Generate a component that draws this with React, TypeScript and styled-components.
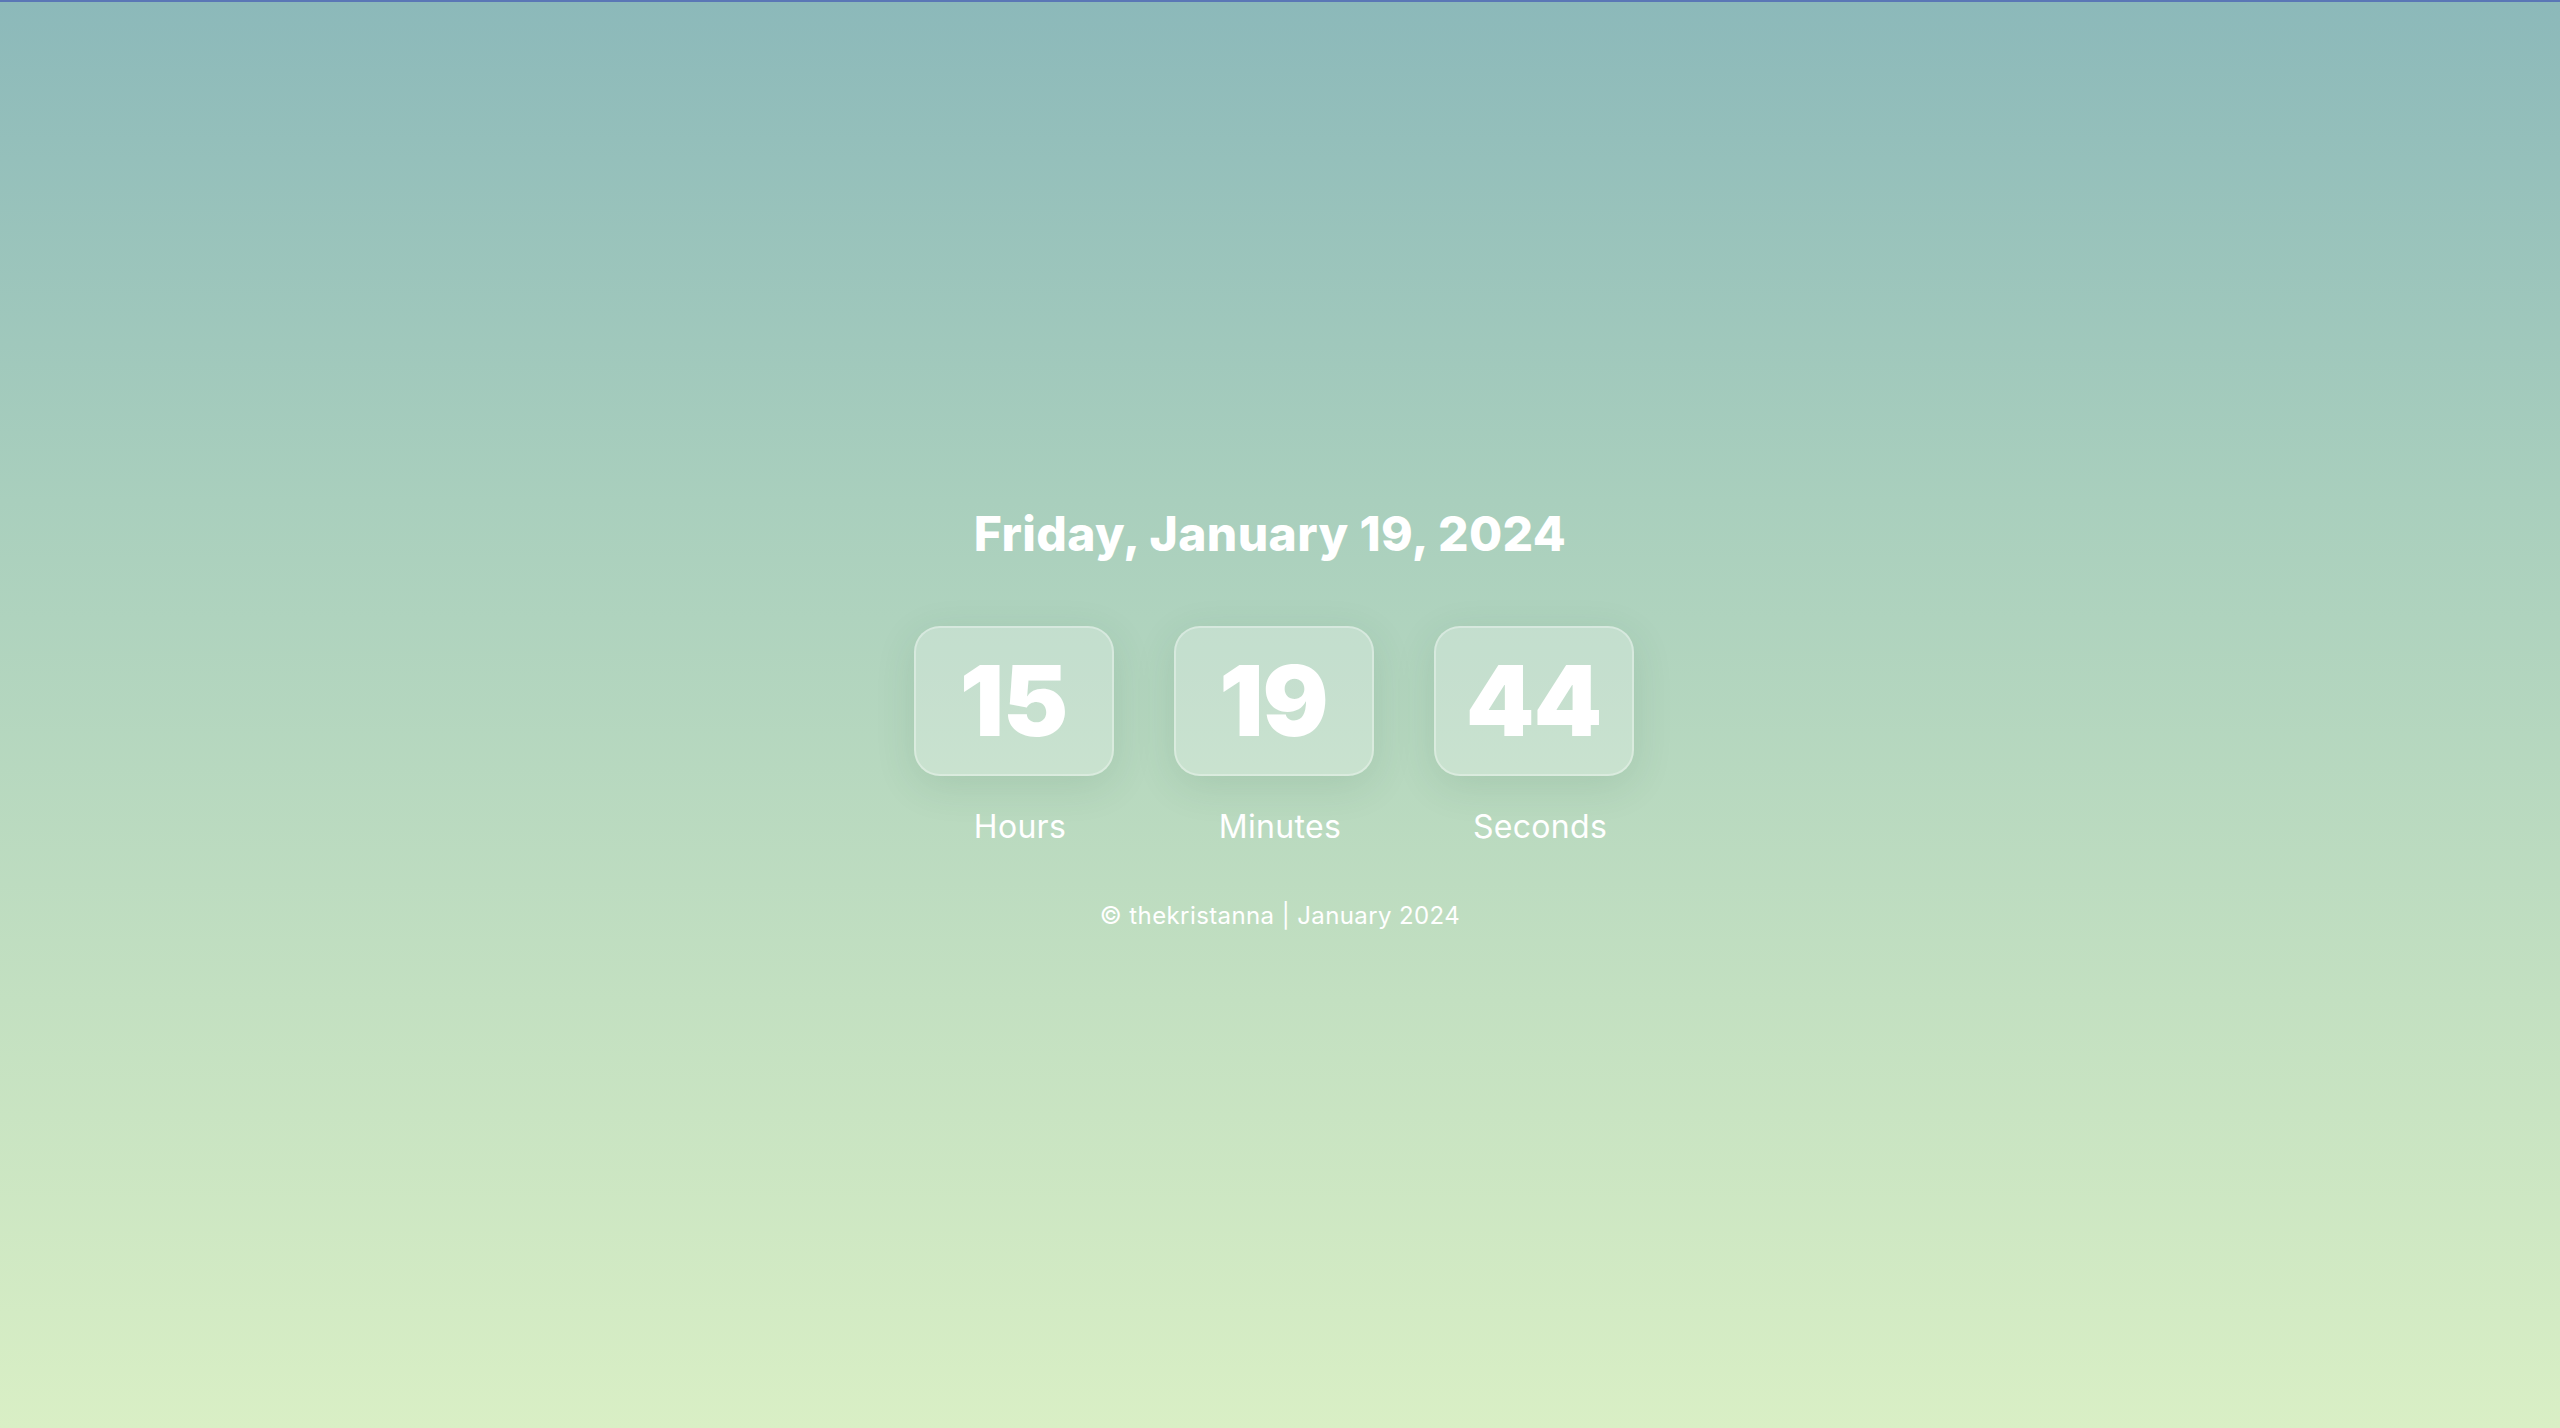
import styled, { createGlobalStyle } from "styled-components";

const GlobalStyle = createGlobalStyle`
    html, body {
        margin: 0;
        padding: 0;
    }
    * {
        box-sizing: border-box;
    }
`

const Page = styled.div`
    min-height: 100vh;
    border-top: 2px solid #5a77b6;
    background: linear-gradient(to bottom, #8cb9ba 0%, #a9cfbd 35%, #c3e0c1 70%, #d9efc5 100%);
    display: flex;
    flex-direction: column;
    align-items: center;
    padding-top: 508px;
    color: #ffffff;
    font-family: 'Inter', 'Noto Sans', sans-serif;
`

const DateLine = styled.h1`
    margin: 0 20px 0 0;
    font-size: 48px;
    line-height: 48px;
    font-weight: 800;
    letter-spacing: 0.4px;
`

const Clock = styled.div`
    display: flex;
    gap: 47px;
    margin-top: 68px;
`

const Unit = styled.div`
    width: 213px;
    display: flex;
    flex-direction: column;
    align-items: center;
`

const Tile = styled.div`
    width: 200px;
    height: 150px;
    margin-right: 13px;
    border-radius: 26px;
    background: rgba(255, 255, 255, 0.25);
    border: 2px solid rgba(255, 255, 255, 0.32);
    box-shadow: 0 10px 40px rgba(40, 90, 60, 0.12);
    display: flex;
    justify-content: center;
    align-items: center;
    font-size: 98px;
    font-weight: 900;
    line-height: 1;
    letter-spacing: -1px;
`

const Label = styled.div`
    margin-top: 35px;
    font-size: 32px;
    line-height: 31px;
    font-weight: 400;
    letter-spacing: 0.3px;
`

const Footer = styled.footer`
    margin-top: 62px;
    font-size: 24px;
    line-height: 24px;
    font-weight: 400;
    letter-spacing: 0.4px;
`

const units = [
    { value: "15", label: "Hours" },
    { value: "19", label: "Minutes" },
    { value: "44", label: "Seconds" },
]

const App = () => (
    <>
        <GlobalStyle />
        <Page>
            <DateLine>Friday, January 19, 2024</DateLine>
            <Clock>
                {units.map(u => (
                    <Unit key={u.label}>
                        <Tile>{u.value}</Tile>
                        <Label>{u.label}</Label>
                    </Unit>
                ))}
            </Clock>
            <Footer>© thekristanna | January 2024</Footer>
        </Page>
    </>
)

export default App
